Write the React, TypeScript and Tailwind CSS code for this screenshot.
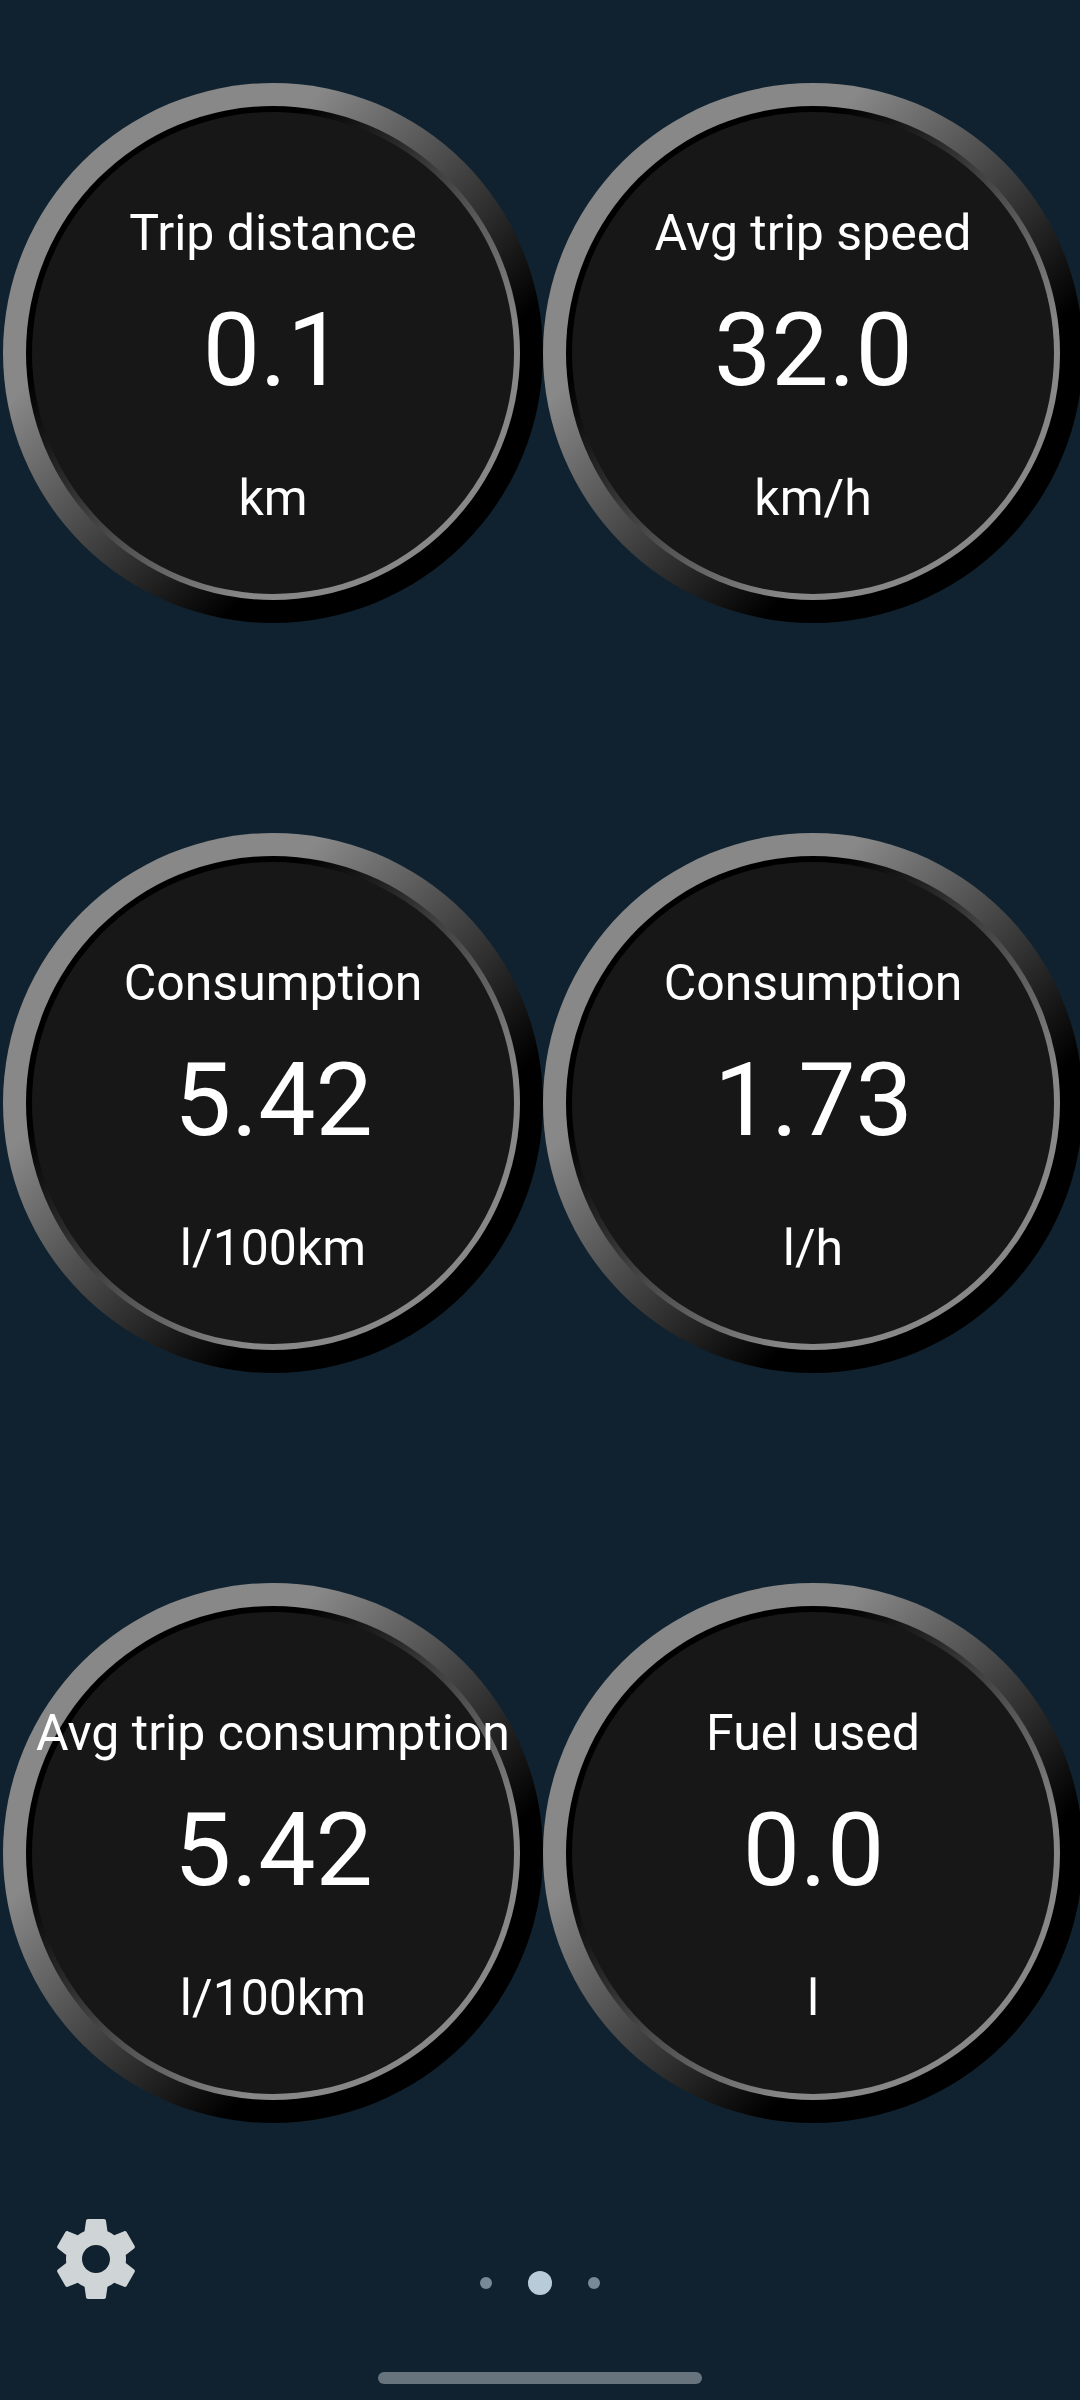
import React from 'react';

interface GaugeProps {
  title: string;
  value: string;
  unit: string;
}

const gauges: GaugeProps[] = [
  { title: 'Trip distance', value: '0.1', unit: 'km' },
  { title: 'Avg trip speed', value: '32.0', unit: 'km/h' },
  { title: 'Consumption', value: '5.42', unit: 'l/100km' },
  { title: 'Consumption', value: '1.73', unit: 'l/h' },
  { title: 'Avg trip consumption', value: '5.42', unit: 'l/100km' },
  { title: 'Fuel used', value: '0.0', unit: 'l' },
];

// bezel, inner rim and face share one grid cell so they stay concentric
const Gauge: React.FC<GaugeProps> = ({ title, value, unit }) => (
  <div className="grid size-[540px] place-items-center rounded-full bg-[linear-gradient(135deg,#888888_30%,#000000_70%)] *:col-start-1 *:row-start-1">
    <div className="grid size-[494px] place-items-center rounded-full bg-[linear-gradient(135deg,#000000_28%,#888888_72%)]">
      <div className="size-[482px] rounded-full bg-[#171717]" />
    </div>
    <div className="flex h-full flex-col items-center whitespace-nowrap pt-[125px] text-white">
      <div className="text-[50px] leading-none">{title}</div>
      <div className="mt-[42px] pl-px text-[102px] leading-[100px]">{value}</div>
      <div className="mt-[73px] text-[50px] leading-none">{unit}</div>
    </div>
  </div>
);

const SettingsIcon: React.FC = () => (
  <svg viewBox="0 0 24 24" className="size-24 fill-[#cfd4d7]">
    <path d="M19.43 12.98c.04-.32.07-.64.07-.98s-.03-.66-.07-.98l2.11-1.65c.19-.15.24-.42.12-.64l-2-3.46c-.12-.22-.39-.3-.61-.22l-2.49 1c-.52-.4-1.08-.73-1.69-.98l-.38-2.65C14.46 2.18 14.25 2 14 2h-4c-.25 0-.46.18-.49.42l-.38 2.65c-.61.25-1.17.59-1.69.98l-2.49-1c-.23-.09-.49 0-.61.22l-2 3.46c-.13.22-.07.49.12.64l2.11 1.65c-.04.32-.07.65-.07.98s.03.66.07.98l-2.11 1.65c-.19.15-.24.42-.12.64l2 3.46c.12.22.39.3.61.22l2.49-1c.52.4 1.08.73 1.69.98l.38 2.65c.03.24.24.42.49.42h4c.25 0 .46-.18.49-.42l.38-2.65c.61-.25 1.17-.59 1.69-.98l2.49 1c.23.09.49 0 .61-.22l2-3.46c.12-.22.07-.49-.12-.64l-2.11-1.65zM12 15.5c-1.93 0-3.5-1.57-3.5-3.5s1.57-3.5 3.5-3.5 3.5 1.57 3.5 3.5-1.57 3.5-3.5 3.5z" />
  </svg>
);

const App: React.FC = () => {
  return (
    <div className="flex h-[2400px] w-[1080px] flex-col overflow-hidden bg-[#10222f] pt-[83px] font-['Roboto',sans-serif]">
      <div className="grid grid-cols-[540px_540px] gap-y-[210px] pl-[3px]">
        {gauges.map((gauge, i) => (
          <Gauge key={i} {...gauge} />
        ))}
      </div>

      <div className="mt-[88px] grid grid-cols-3 px-12">
        <button type="button" aria-label="Settings" className="size-24">
          <SettingsIcon />
        </button>
        <div className="mt-15 flex h-6 items-center justify-center gap-9">
          <span className="size-3 rounded-full bg-[#788a97]" />
          <span className="size-6 rounded-full bg-[#b8cbd9]" />
          <span className="size-3 rounded-full bg-[#788a97]" />
        </div>
      </div>

      <div className="mx-auto mt-auto mb-4 h-3 w-[324px] rounded-full bg-[#67747d]" />
    </div>
  );
};

export default App;
